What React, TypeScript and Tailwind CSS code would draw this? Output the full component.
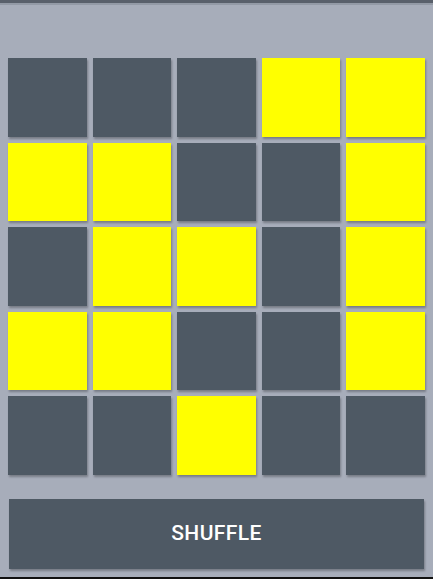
const ON = true
const OFF = false

// 5x5 board, top-left first
const BOARD: boolean[][] = [
  [OFF, OFF, OFF, ON, ON],
  [ON, ON, OFF, OFF, ON],
  [OFF, ON, ON, OFF, ON],
  [ON, ON, OFF, OFF, ON],
  [OFF, OFF, ON, OFF, OFF],
]

export default function App() {
  return (
    <div
      className="flex h-[579px] w-[433px] flex-col overflow-hidden bg-[#a7adba]"
      style={{ fontFamily: 'Roboto, "Liberation Sans", sans-serif' }}
    >
      <div className="h-[3px] bg-[#59606b]" />
      <div className="h-[2px] bg-[#939aa6]" />

      <div className="grid grid-cols-5 gap-x-[6px] gap-y-[6px] px-[8px] pt-[53px]">
        {BOARD.flat().map((lit, i) => (
          <div
            key={i}
            className={
              'aspect-square shadow-[1px_2px_2px_rgba(0,0,0,0.28)] ' +
              (lit ? 'bg-[#ffff00]' : 'bg-[#4e5964]')
            }
          />
        ))}
      </div>

      <div className="px-[9px] pt-[24px]">
        <button className="flex h-[70px] w-full items-center justify-center bg-[#4e5964] text-[21px] font-medium tracking-[0.4px] text-white shadow-[1px_2px_2px_rgba(0,0,0,0.28)]">
          SHUFFLE
        </button>
      </div>

      <div className="flex-1" />
      <div className="h-[2px] bg-[#111]" />
    </div>
  )
}
